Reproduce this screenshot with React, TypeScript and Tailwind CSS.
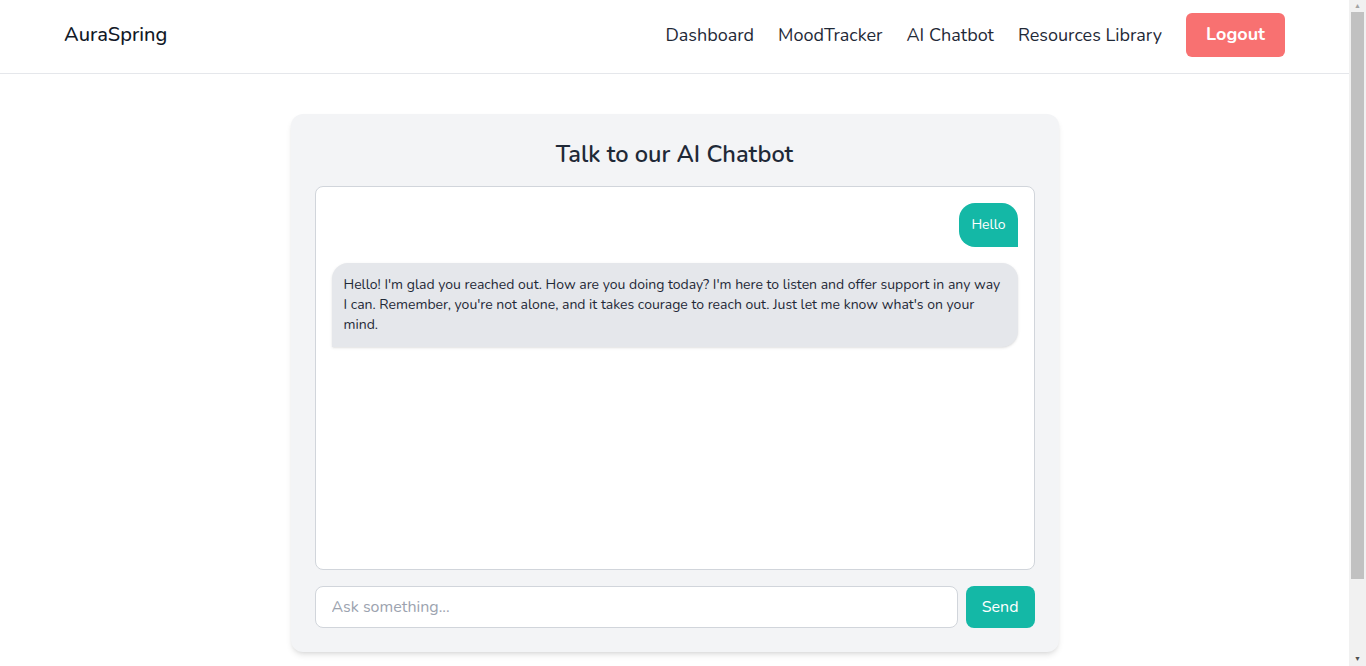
import { useState } from 'react';

const font = { fontFamily: '"Nunito", "Lato", "Open Sans", sans-serif' };

interface Message {
  role: 'user' | 'bot';
  text: string;
}

const initialMessages: Message[] = [
  { role: 'user', text: 'Hello' },
  {
    role: 'bot',
    text: "Hello! I'm glad you reached out. How are you doing today? I'm here to listen and offer support in any way I can. Remember, you're not alone, and it takes courage to reach out. Just let me know what's on your mind.",
  },
];

function Navbar() {
  return (
    <nav className="h-[74px] pb-1 bg-white border-b border-[#e5e7eb] px-16 flex items-center justify-between">
      <span className="text-[20px] font-medium text-[#111827]">AuraSpring</span>
      <div className="flex items-center gap-6 text-[18px] text-[#1f2937]">
        <a href="#" className="pt-0.5">Dashboard</a>
        <a href="#" className="pt-0.5">MoodTracker</a>
        <a href="#" className="pt-0.5">AI Chatbot</a>
        <a href="#" className="pt-0.5">Resources Library</a>
        <button className="bg-[#f87171] text-white font-bold px-5 h-11 rounded-md">
          Logout
        </button>
      </div>
    </nav>
  );
}

// the window scrollbar seen in the shot
function Scrollbar() {
  return (
    <div className="fixed right-0 top-0 w-[17px] h-screen bg-[#f1f1f1] flex flex-col items-center">
      <div className="h-[12px] flex items-center text-[7px] text-[#a3a3a3]">▲</div>
      <div className="w-[13px] h-[567px] bg-[#c1c1c1]" />
      <div className="flex-1" />
      <div className="h-[14px] flex items-center text-[7px] text-[#505050]">▼</div>
    </div>
  );
}

export default function App() {
  const [messages] = useState<Message[]>(initialMessages);
  const [input, setInput] = useState('');

  return (
    <div style={font} className="bg-white text-[#1f2937]">
      <div className="mr-[17px]">
        <Navbar />
        <main className="min-h-screen pt-10">
          <div className="max-w-3xl mx-auto bg-[#f3f4f6] rounded-xl shadow-md p-6">
            <h1 className="text-[23.6px] font-semibold text-[#1f2937] text-center mb-4 leading-8">
              Talk to our AI Chatbot
            </h1>
            <div className="h-96 overflow-y-auto bg-white border border-[#d1d5db] rounded-lg p-4 flex flex-col gap-4">
              {messages.map((m, i) =>
                m.role === 'user' ? (
                  <div key={i} className="flex justify-end">
                    <div className="bg-[#14b8a6] text-white text-sm px-3 py-3 rounded-2xl rounded-br-none">
                      {m.text}
                    </div>
                  </div>
                ) : (
                  <div key={i} className="flex justify-start">
                    <div className="bg-[#e5e7eb] text-[#1f2937] text-sm leading-5 p-3 rounded-2xl rounded-bl-none shadow-sm">
                      {m.text}
                    </div>
                  </div>
                ),
              )}
            </div>
            <div className="flex gap-2 mt-4">
              <input
                value={input}
                onChange={(e) => setInput(e.target.value)}
                placeholder="Ask something..."
                className="flex-1 h-[42px] border border-[#d1d5db] rounded-lg px-4 bg-white text-base placeholder-[#9ca3af] outline-none"
              />
              <button className="bg-[#14b8a6] text-white px-4 rounded-lg text-base">
                Send
              </button>
            </div>
          </div>
        </main>
      </div>
      <Scrollbar />
    </div>
  );
}
